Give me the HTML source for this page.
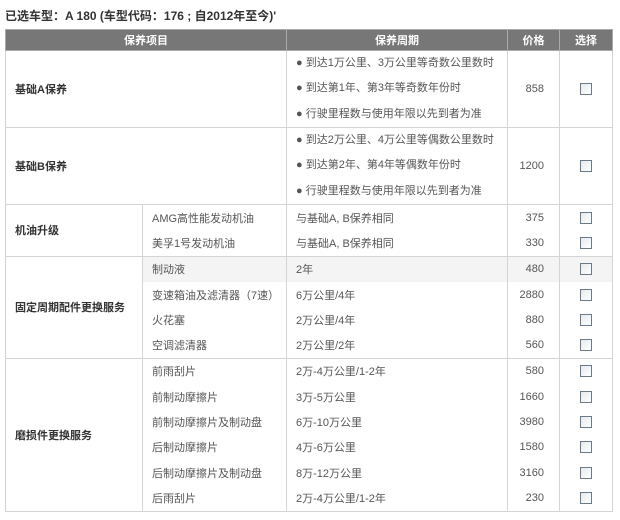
<!DOCTYPE html>
<html><head><meta charset="utf-8"><style>
body{margin:0;background:#fff;font-family:"Liberation Sans","Noto Sans CJK SC",sans-serif;color:#555;font-size:11px;}
.t{position:absolute;left:5px;top:7px;font-size:12px;font-weight:bold;color:#333;}
table{position:absolute;left:5px;top:29px;width:607px;border-collapse:collapse;table-layout:fixed;}
td,th{border:1px solid #d4d4d4;border-top:none;border-bottom:none;padding:0;height:25.3px;vertical-align:middle;}
tr.g1 td{border-top:1px solid #d4d4d4;}
tr.last td{border-bottom:1px solid #d4d4d4;}
td[rowspan]{border-bottom:1px solid #d4d4d4;border-top:1px solid #d4d4d4;}
th{background:#777;color:#fff;font-weight:bold;height:20px;border:1px solid #aaa;font-size:11px;}
td.h{font-weight:bold;color:#333;padding-left:9px;}
td.s{padding-left:9px;}
td.p{text-align:right;padding-right:15px;}
td.c{text-align:center;}
.cb{display:inline-block;width:10px;height:10px;border:1px solid #6b7a8a;background:linear-gradient(135deg,#e6e9ee,#fff);vertical-align:middle;}
.b{line-height:25.3px;padding-left:9px;}
tr.hl td.g{background:#f4f4f4;}
</style></head><body>
<div class="t">已选车型：A 180 (车型代码：176 ; 自2012年至今)'</div>
<table>
<colgroup><col style="width:137px"><col style="width:144px"><col style="width:221px"><col style="width:52px"><col style="width:53px"></colgroup>
<tr><th colspan="2">保养项目</th><th>保养周期</th><th>价格</th><th>选择</th></tr>
<tr class="g1"><td class="h" colspan="2" style="height:76px">基础A保养</td><td><div class="b">● 到达1万公里、3万公里等奇数公里数时</div><div class="b">● 到达第1年、第3年等奇数年份时</div><div class="b">● 行驶里程数与使用年限以先到者为准</div></td><td class="p">858</td><td class="c"><span class="cb"></span></td></tr>
<tr class="g1"><td class="h" colspan="2" style="height:76px">基础B保养</td><td><div class="b">● 到达2万公里、4万公里等偶数公里数时</div><div class="b">● 到达第2年、第4年等偶数年份时</div><div class="b">● 行驶里程数与使用年限以先到者为准</div></td><td class="p">1200</td><td class="c"><span class="cb"></span></td></tr>
<tr class="g1"><td class="h" rowspan="2">机油升级</td><td class="s">AMG高性能发动机油</td><td class="s">与基础A, B保养相同</td><td class="p">375</td><td class="c"><span class="cb"></span></td></tr>
<tr><td class="s">美孚1号发动机油</td><td class="s">与基础A, B保养相同</td><td class="p">330</td><td class="c"><span class="cb"></span></td></tr>
<tr class="hl g1"><td class="h" rowspan="4">固定周期配件更换服务</td><td class="s g">制动液</td><td class="s g">2年</td><td class="p g">480</td><td class="c g"><span class="cb"></span></td></tr>
<tr><td class="s">变速箱油及滤清器（7速）</td><td class="s">6万公里/4年</td><td class="p">2880</td><td class="c"><span class="cb"></span></td></tr>
<tr><td class="s">火花塞</td><td class="s">2万公里/4年</td><td class="p">880</td><td class="c"><span class="cb"></span></td></tr>
<tr><td class="s">空调滤清器</td><td class="s">2万公里/2年</td><td class="p">560</td><td class="c"><span class="cb"></span></td></tr>
<tr class="g1"><td class="h" rowspan="6">磨损件更换服务</td><td class="s">前雨刮片</td><td class="s">2万-4万公里/1-2年</td><td class="p">580</td><td class="c"><span class="cb"></span></td></tr>
<tr><td class="s">前制动摩擦片</td><td class="s">3万-5万公里</td><td class="p">1660</td><td class="c"><span class="cb"></span></td></tr>
<tr><td class="s">前制动摩擦片及制动盘</td><td class="s">6万-10万公里</td><td class="p">3980</td><td class="c"><span class="cb"></span></td></tr>
<tr><td class="s">后制动摩擦片</td><td class="s">4万-6万公里</td><td class="p">1580</td><td class="c"><span class="cb"></span></td></tr>
<tr><td class="s">后制动摩擦片及制动盘</td><td class="s">8万-12万公里</td><td class="p">3160</td><td class="c"><span class="cb"></span></td></tr>
<tr class="last"><td class="s">后雨刮片</td><td class="s">2万-4万公里/1-2年</td><td class="p">230</td><td class="c"><span class="cb"></span></td></tr>
</table>
</body></html>
